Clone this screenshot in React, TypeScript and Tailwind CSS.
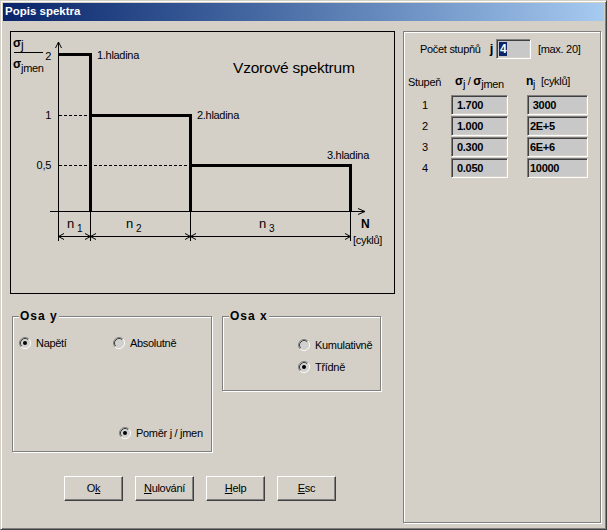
import React from "react"

const face = "#d4d0c8"

function Radio({ checked, label }: { checked?: boolean; label: string }) {
  return (
    <div className="flex items-center gap-[5px] h-[12px]">
      <svg width="12" height="12" viewBox="0 0 12 12" className="shrink-0">
        <circle cx="6" cy="6" r="4.2" fill="#d0d0d0" />
        <path d="M2.11 9.89 A5.5 5.5 0 0 1 9.89 2.11" fill="none" stroke="#808080" />
        <path d="M9.89 2.11 A5.5 5.5 0 0 1 2.11 9.89" fill="none" stroke="#ffffff" />
        <path d="M2.82 9.18 A4.5 4.5 0 0 1 9.18 2.82" fill="none" stroke="#404040" />
        <path d="M9.18 2.82 A4.5 4.5 0 0 1 2.82 9.18" fill="none" stroke={face} />
        {checked && <circle cx="6" cy="6" r="2" fill="#000" />}
      </svg>
      <span className="leading-none">{label}</span>
    </div>
  )
}

function Group({ title, className, children }: { title: string; className: string; children: React.ReactNode }) {
  return (
    <div
      className={`relative border border-[#808080] shadow-[inset_1px_1px_0_#fff,1px_1px_0_#fff] ${className}`}
    >
      <span className="absolute -top-[8px] left-[6px] px-[1px] bg-[#d4d0c8] font-bold text-[12px] leading-[14px] tracking-[1px]">
        {title}
      </span>
      {children}
    </div>
  )
}

function Button({ children }: { children: React.ReactNode }) {
  return (
    <button className="w-[59px] h-[25px] flex items-center justify-center border border-t-white border-l-white border-r-[#404040] border-b-[#404040] shadow-[inset_-1px_-1px_0_#808080] bg-[#d4d0c8]">
      {children}
    </button>
  )
}

const sunken =
  "border border-t-[#808080] border-l-[#808080] border-r-white border-b-white shadow-[inset_1px_1px_0_#404040,inset_-1px_-1px_0_#d4d0c8] bg-[#c8c8c8]"

const rows = [
  { n: "1", s: "1.700", c: "\u00a03000" },
  { n: "2", s: "1.000", c: "2E+5" },
  { n: "3", s: "0.300", c: "6E+6" },
  { n: "4", s: "0.050", c: "10000" },
]

function Chart() {
  const t = { fontFamily: "Liberation Sans, Arial, sans-serif", fontSize: 11, letterSpacing: -0.3 }
  const arrowL = (x: number) => `M${x + 6} 233.5 L${x + 0.5} 236.5 L${x + 6} 239.5`
  const arrowR = (x: number) => `M${x - 5} 233.5 L${x + 0.5} 236.5 L${x - 5} 239.5`
  return (
    <svg width="383" height="261" viewBox="11 32 383 261" className="block">
      {/* axes */}
      <line x1="58.5" y1="42" x2="58.5" y2="241" stroke="#000" />
      <path d="M55.5 48 L58.5 42 L61.5 48" fill="none" stroke="#000" />
      <line x1="50" y1="211.5" x2="365" y2="211.5" stroke="#000" />
      <path d="M358 208.5 L365 211.5 L358 214.5" fill="none" stroke="#000" />

      {/* dashed guides */}
      <line x1="59" y1="115.5" x2="89" y2="115.5" stroke="#000" strokeDasharray="3 2" />
      <line x1="59" y1="165.5" x2="189" y2="165.5" stroke="#000" strokeDasharray="3 2" />

      {/* spectrum */}
      <g fill="none" stroke="#000" strokeWidth="3" strokeLinejoin="miter">
        <path d="M59 54.5 H90.5 V211" />
        <path d="M90.5 115.5 H190.5 V211" />
        <path d="M190.5 165.5 H350.5 V211" />
      </g>

      {/* dimension line */}
      <line x1="58.5" y1="236.5" x2="350.5" y2="236.5" stroke="#000" />
      <g stroke="#000">
        <line x1="90.5" y1="211" x2="90.5" y2="241" />
        <line x1="190.5" y1="211" x2="190.5" y2="241" />
        <line x1="350.5" y1="211" x2="350.5" y2="241" />
      </g>
      <g fill="none" stroke="#000">
        <path d={arrowL(58)} />
        <path d={arrowR(90)} />
        <path d={arrowL(90)} />
        <path d={arrowR(190)} />
        <path d={arrowL(190)} />
        <path d={arrowR(350)} />
      </g>

      {/* y labels */}
      <g style={t} textAnchor="end">
        <text x="51" y="60">2</text>
        <text x="51" y="119">1</text>
        <text x="51" y="169">0,5</text>
      </g>

      {/* fraction */}
      <text x="13" y="47" style={{ ...t, fontSize: 12, fontWeight: 700 }}>σ</text>
      <text x="21" y="49" style={{ ...t, fontSize: 12 }}>j</text>
      <line x1="14" y1="52.5" x2="43" y2="52.5" stroke="#000" />
      <text x="13" y="68" style={{ ...t, fontSize: 12, fontWeight: 700 }}>σ</text>
      <text x="21" y="72" style={{ ...t, fontSize: 11 }}>jmen</text>

      {/* level labels */}
      <g style={t}>
        <text x="97" y="58.5">1.hladina</text>
        <text x="197" y="119">2.hladina</text>
        <text x="327" y="159">3.hladina</text>
      </g>

      <text x="233" y="73" style={{ ...t, fontSize: 15.5, letterSpacing: -0.2 }}>
        Vzorové spektrum
      </text>

      {/* n labels */}
      <g style={{ ...t, fontSize: 13 }}>
        <text x="67" y="228">n</text>
        <text x="126" y="228">n</text>
        <text x="259" y="228">n</text>
      </g>
      <g style={{ ...t, fontSize: 10 }}>
        <text x="77" y="232">1</text>
        <text x="136" y="232">2</text>
        <text x="269" y="232">3</text>
      </g>

      <text x="361" y="228" style={{ ...t, fontSize: 12, fontWeight: 700 }}>N</text>
      <text x="353" y="244" style={t}>[cyklů]</text>
    </svg>
  )
}

export default function App() {
  return (
    <div className="w-[607px] h-[530px] bg-[#d4d0c8] border border-t-[#d4d0c8] border-l-[#d4d0c8] border-r-[#404040] border-b-[#404040] shadow-[inset_1px_1px_0_#fff,inset_-1px_-1px_0_#808080] p-[2px] font-['Liberation_Sans',Arial,sans-serif] text-[11px] tracking-[-0.3px] text-black overflow-hidden">
      {/* title bar */}
      <div className="h-[18px] bg-gradient-to-r from-[#0a246a] to-[#a6caf0] flex items-center pl-[2px]">
        <span className="text-white font-bold text-[11.5px] tracking-normal">Popis spektra</span>
      </div>

      <div className="flex pt-[10px] pl-[7px]">
        {/* left column */}
        <div className="w-[385px] flex flex-col">
          <div className="h-[263px] border border-black">
            <Chart />
          </div>

          <div className="flex mt-[22px] ml-[2px] gap-[10px] items-start">
            <Group title="Osa y" className="w-[200px] h-[136px]">
              <div className="h-full flex flex-col justify-between pt-[20px] pb-[12px]">
                <div className="flex">
                  <div className="w-[100px] pl-[6px]">
                    <Radio checked label="Napětí" />
                  </div>
                  <Radio label="Absolutně" />
                </div>
                <div className="pl-[106px]">
                  <Radio checked label="Poměr j / jmen" />
                </div>
              </div>
            </Group>
            <Group title="Osa x" className="w-[159px] h-[75px]">
              <div className="flex flex-col gap-[10px] pt-[22px] pl-[75px]">
                <Radio label="Kumulativně" />
                <Radio checked label="Třídně" />
              </div>
            </Group>
          </div>

          <div className="flex gap-[12px] mt-[24px] ml-[54px]">
            <Button>
              O<u>k</u>
            </Button>
            <Button>
              <u>N</u>ulování
            </Button>
            <Button>
              <u>H</u>elp
            </Button>
            <Button>
              <u>E</u>sc
            </Button>
          </div>
        </div>

        {/* right panel */}
        <div className="ml-[8px] w-[198px] h-[492px] border border-[#808080] shadow-[inset_1px_1px_0_#fff,1px_1px_0_#fff]">
          <div className="flex items-center mt-[7px] ml-[16px] h-[20px]">
            <span>Počet stupňů</span>
            <span className="ml-[9px] font-bold text-[13px]">j</span>
            <div className={`ml-[3px] w-[35px] h-[20px] ${sunken} flex items-center pl-[2px]`}>
              <span className="bg-[#0a246a] text-white font-bold text-[12px] leading-[14px] px-[1px]">4</span>
            </div>
            <span className="ml-[7px]">[max. 20]</span>
          </div>

          <div className="flex items-end mt-[15px] ml-[4px] h-[16px]">
            <span className="w-[47px]">Stupeň</span>
            <span className="w-[71px] whitespace-nowrap">
              <b className="text-[12px]">σ</b>
              <sub className="text-[11px]">j</sub> / <b className="text-[12px]">σ</b>
              <sub className="text-[11px]">jmen</sub>
            </span>
            <span className="whitespace-nowrap">
              <b className="text-[12px]">n</b>
              <sub className="text-[10px]">j</sub>
              <span className="ml-[6px]">[cyklů]</span>
            </span>
          </div>

          <div className="flex flex-col gap-[1px] mt-[5px] ml-[4px]">
            {rows.map((r) => (
              <div key={r.n} className="flex items-center h-[20px]">
                <span className="w-[43px] pl-[14px]">{r.n}</span>
                <div className={`w-[57px] h-[20px] ${sunken} flex items-center pl-[5px] font-bold`}>{r.s}</div>
                <div className={`ml-[19px] w-[61px] h-[20px] ${sunken} flex items-center pl-[2px] font-bold`}>{r.c}</div>
              </div>
            ))}
          </div>
        </div>
      </div>
    </div>
  )
}
